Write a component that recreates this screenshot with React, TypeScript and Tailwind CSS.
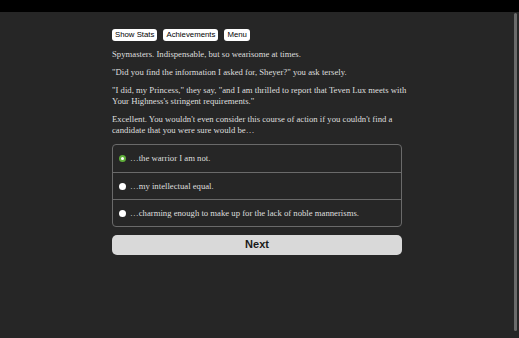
import { useState } from 'react';

const choices = [
  '…the warrior I am not.',
  '…my intellectual equal.',
  '…charming enough to make up for the lack of noble mannerisms.',
];

export default function App() {
  const [picked, setPicked] = useState(0);

  return (
    <div className="relative h-[338px] w-[519px] overflow-hidden bg-[#262626]">
      {/* top bar */}
      <div className="h-[12px] bg-black" />

      {/* scrollbar */}
      <div className="absolute right-[2px] top-[13px] h-[318px] w-[3px] rounded-full bg-[#6b6b6b]" />

      <div className="ml-[112px] w-[290px] pt-[17px] font-['Liberation_Serif',serif] text-[8.7px] leading-[11px] text-[#dedede]">
        {/* header buttons */}
        <div className="flex gap-[6px] font-['Liberation_Sans',Arial,sans-serif] text-[7.8px] leading-none text-black">
          <button className="h-[12px] rounded-[3px] bg-white px-[3px]">Show Stats</button>
          <button className="h-[12px] rounded-[3px] bg-white px-[3px]">Achievements</button>
          <button className="h-[12px] rounded-[3px] bg-white px-[3px]">Menu</button>
        </div>

        <div className="mt-[8px] flex flex-col gap-[7px] whitespace-nowrap">
          <p>Spymasters. Indispensable, but so wearisome at times.</p>
          <p>"Did you find the information I asked for, Sheyer?" you ask tersely.</p>
          <p>
            "I did, my Princess," they say, "and I am thrilled to report that Teven Lux meets with
            <br />
            Your Highness's stringent requirements."
          </p>
          <p>
            Excellent. You wouldn't even consider this course of action if you couldn't find a
            <br />
            candidate that you were sure would be…
          </p>
        </div>

        {/* choices */}
        <div className="mt-[8px] flex flex-col rounded-[4px] border border-[#6a6a6a]">
          {choices.map((c, i) => (
            <label
              key={c}
              onClick={() => setPicked(i)}
              className={`flex h-[27px] items-center gap-[4px] px-[6px] ${i > 0 ? 'border-t border-[#6a6a6a]' : ''}`}
            >
              {picked === i ? (
                <span className="flex h-[7px] w-[7px] items-center justify-center rounded-full bg-[#5fae3a]">
                  <span className="h-[3px] w-[3px] rounded-full bg-white" />
                </span>
              ) : (
                <span className="h-[7px] w-[7px] rounded-full bg-white" />
              )}
              <span>{c}</span>
            </label>
          ))}
        </div>

        <button className="mt-[8px] h-[20px] w-full rounded-[5px] bg-[#d9d9d9] pb-[1px] font-['Liberation_Sans',Arial,sans-serif] text-[11px] font-bold text-[#1a1a1a]">
          Next
        </button>
      </div>
    </div>
  );
}
